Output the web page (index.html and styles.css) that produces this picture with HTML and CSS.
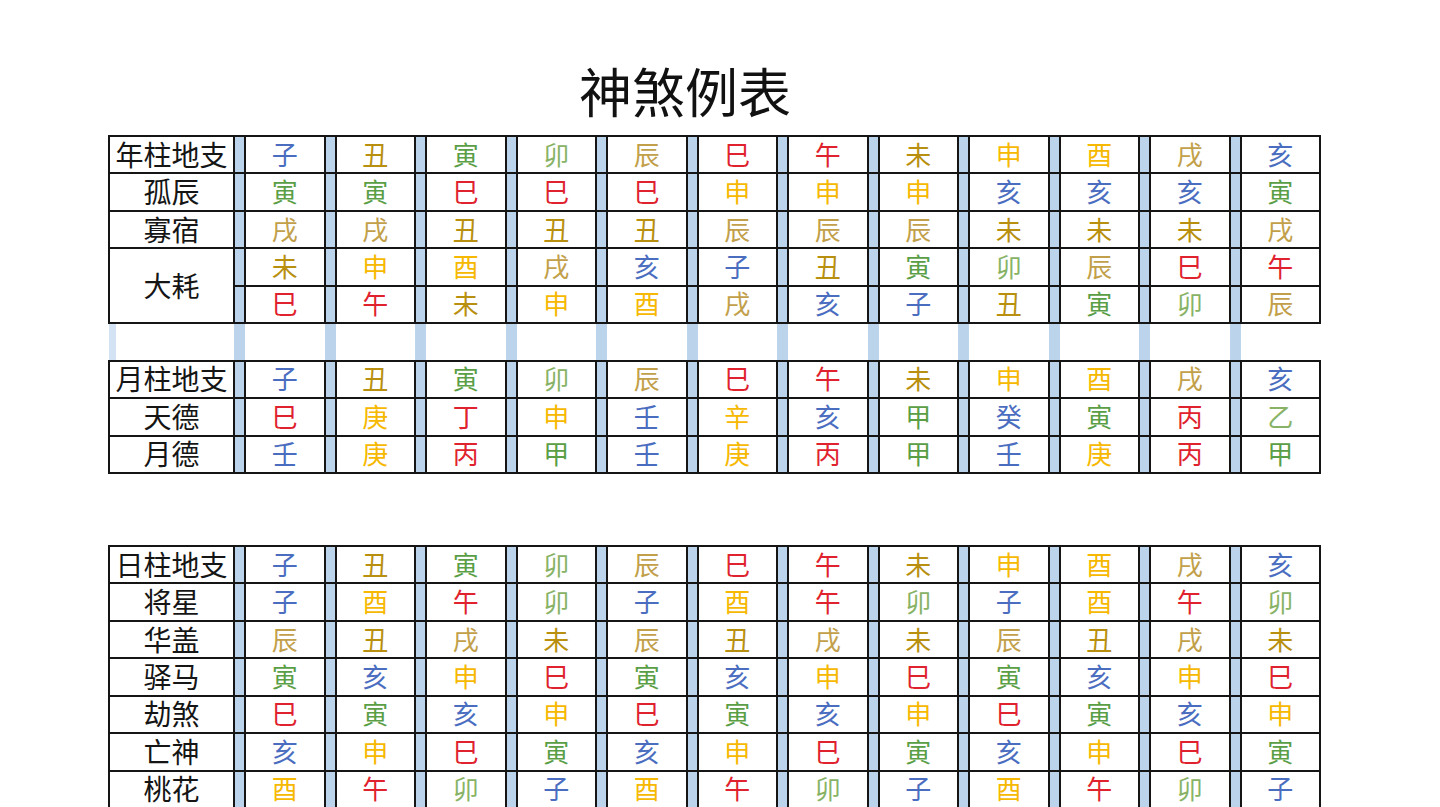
FILE: index.html
```html
<!DOCTYPE html>
<html lang="zh-CN">
<head>
<meta charset="utf-8">
<title>神煞例表</title>
<link rel="stylesheet" href="styles.css">
</head>
<body>
<main class="page">
<h1 class="title">神煞例表</h1>

<table class="grid grid-top">
<colgroup>
<col class="c-label">
<col class="c-sep"><col class="c-data"><col class="c-sep"><col class="c-data"><col class="c-sep"><col class="c-data"><col class="c-sep"><col class="c-data">
<col class="c-sep"><col class="c-data"><col class="c-sep"><col class="c-data"><col class="c-sep"><col class="c-data"><col class="c-sep"><col class="c-data">
<col class="c-sep"><col class="c-data"><col class="c-sep"><col class="c-data"><col class="c-sep"><col class="c-data"><col class="c-sep"><col class="c-data">
</colgroup>
<tbody>
<tr><th>年柱地支</th><td class="s"></td><td class="w">子</td><td class="s"></td><td class="e">丑</td><td class="s"></td><td class="g">寅</td><td class="s"></td><td class="gl">卯</td><td class="s"></td><td class="el">辰</td><td class="s"></td><td class="r">巳</td><td class="s"></td><td class="r">午</td><td class="s"></td><td class="e">未</td><td class="s"></td><td class="y">申</td><td class="s"></td><td class="y">酉</td><td class="s"></td><td class="el">戌</td><td class="s"></td><td class="w">亥</td></tr>
<tr><th>孤辰</th><td class="s"></td><td class="g">寅</td><td class="s"></td><td class="g">寅</td><td class="s"></td><td class="r">巳</td><td class="s"></td><td class="r">巳</td><td class="s"></td><td class="r">巳</td><td class="s"></td><td class="y">申</td><td class="s"></td><td class="y">申</td><td class="s"></td><td class="y">申</td><td class="s"></td><td class="w">亥</td><td class="s"></td><td class="w">亥</td><td class="s"></td><td class="w">亥</td><td class="s"></td><td class="g">寅</td></tr>
<tr><th>寡宿</th><td class="s"></td><td class="el">戌</td><td class="s"></td><td class="el">戌</td><td class="s"></td><td class="e">丑</td><td class="s"></td><td class="e">丑</td><td class="s"></td><td class="e">丑</td><td class="s"></td><td class="el">辰</td><td class="s"></td><td class="el">辰</td><td class="s"></td><td class="el">辰</td><td class="s"></td><td class="e">未</td><td class="s"></td><td class="e">未</td><td class="s"></td><td class="e">未</td><td class="s"></td><td class="el">戌</td></tr>
<tr><th rowspan="2">大耗</th><td class="s"></td><td class="e">未</td><td class="s"></td><td class="y">申</td><td class="s"></td><td class="y">酉</td><td class="s"></td><td class="el">戌</td><td class="s"></td><td class="w">亥</td><td class="s"></td><td class="w">子</td><td class="s"></td><td class="e">丑</td><td class="s"></td><td class="g">寅</td><td class="s"></td><td class="gl">卯</td><td class="s"></td><td class="el">辰</td><td class="s"></td><td class="r">巳</td><td class="s"></td><td class="r">午</td></tr>
<tr><td class="s"></td><td class="r">巳</td><td class="s"></td><td class="r">午</td><td class="s"></td><td class="e">未</td><td class="s"></td><td class="y">申</td><td class="s"></td><td class="y">酉</td><td class="s"></td><td class="el">戌</td><td class="s"></td><td class="w">亥</td><td class="s"></td><td class="w">子</td><td class="s"></td><td class="e">丑</td><td class="s"></td><td class="g">寅</td><td class="s"></td><td class="gl">卯</td><td class="s"></td><td class="el">辰</td></tr>
<tr class="spacer"><th></th><td class="s"></td><td></td><td class="s"></td><td></td><td class="s"></td><td></td><td class="s"></td><td></td><td class="s"></td><td></td><td class="s"></td><td></td><td class="s"></td><td></td><td class="s"></td><td></td><td class="s"></td><td></td><td class="s"></td><td></td><td class="s"></td><td></td><td class="s"></td><td></td></tr>
<tr><th>月柱地支</th><td class="s"></td><td class="w">子</td><td class="s"></td><td class="e">丑</td><td class="s"></td><td class="g">寅</td><td class="s"></td><td class="gl">卯</td><td class="s"></td><td class="el">辰</td><td class="s"></td><td class="r">巳</td><td class="s"></td><td class="r">午</td><td class="s"></td><td class="e">未</td><td class="s"></td><td class="y">申</td><td class="s"></td><td class="y">酉</td><td class="s"></td><td class="el">戌</td><td class="s"></td><td class="w">亥</td></tr>
<tr><th>天德</th><td class="s"></td><td class="r">巳</td><td class="s"></td><td class="y">庚</td><td class="s"></td><td class="r">丁</td><td class="s"></td><td class="y">申</td><td class="s"></td><td class="w">壬</td><td class="s"></td><td class="y">辛</td><td class="s"></td><td class="w">亥</td><td class="s"></td><td class="g">甲</td><td class="s"></td><td class="w">癸</td><td class="s"></td><td class="g">寅</td><td class="s"></td><td class="r">丙</td><td class="s"></td><td class="gl">乙</td></tr>
<tr><th>月德</th><td class="s"></td><td class="w">壬</td><td class="s"></td><td class="y">庚</td><td class="s"></td><td class="r">丙</td><td class="s"></td><td class="g">甲</td><td class="s"></td><td class="w">壬</td><td class="s"></td><td class="y">庚</td><td class="s"></td><td class="r">丙</td><td class="s"></td><td class="g">甲</td><td class="s"></td><td class="w">壬</td><td class="s"></td><td class="y">庚</td><td class="s"></td><td class="r">丙</td><td class="s"></td><td class="g">甲</td></tr>
</tbody>
</table>

<table class="grid grid-bottom">
<colgroup>
<col class="c-label">
<col class="c-sep"><col class="c-data"><col class="c-sep"><col class="c-data"><col class="c-sep"><col class="c-data"><col class="c-sep"><col class="c-data">
<col class="c-sep"><col class="c-data"><col class="c-sep"><col class="c-data"><col class="c-sep"><col class="c-data"><col class="c-sep"><col class="c-data">
<col class="c-sep"><col class="c-data"><col class="c-sep"><col class="c-data"><col class="c-sep"><col class="c-data"><col class="c-sep"><col class="c-data">
</colgroup>
<tbody>
<tr><th>日柱地支</th><td class="s"></td><td class="w">子</td><td class="s"></td><td class="e">丑</td><td class="s"></td><td class="g">寅</td><td class="s"></td><td class="gl">卯</td><td class="s"></td><td class="el">辰</td><td class="s"></td><td class="r">巳</td><td class="s"></td><td class="r">午</td><td class="s"></td><td class="e">未</td><td class="s"></td><td class="y">申</td><td class="s"></td><td class="y">酉</td><td class="s"></td><td class="el">戌</td><td class="s"></td><td class="w">亥</td></tr>
<tr><th>将星</th><td class="s"></td><td class="w">子</td><td class="s"></td><td class="y">酉</td><td class="s"></td><td class="r">午</td><td class="s"></td><td class="gl">卯</td><td class="s"></td><td class="w">子</td><td class="s"></td><td class="y">酉</td><td class="s"></td><td class="r">午</td><td class="s"></td><td class="gl">卯</td><td class="s"></td><td class="w">子</td><td class="s"></td><td class="y">酉</td><td class="s"></td><td class="r">午</td><td class="s"></td><td class="gl">卯</td></tr>
<tr><th>华盖</th><td class="s"></td><td class="el">辰</td><td class="s"></td><td class="e">丑</td><td class="s"></td><td class="el">戌</td><td class="s"></td><td class="e">未</td><td class="s"></td><td class="el">辰</td><td class="s"></td><td class="e">丑</td><td class="s"></td><td class="el">戌</td><td class="s"></td><td class="e">未</td><td class="s"></td><td class="el">辰</td><td class="s"></td><td class="e">丑</td><td class="s"></td><td class="el">戌</td><td class="s"></td><td class="e">未</td></tr>
<tr><th>驿马</th><td class="s"></td><td class="g">寅</td><td class="s"></td><td class="w">亥</td><td class="s"></td><td class="y">申</td><td class="s"></td><td class="r">巳</td><td class="s"></td><td class="g">寅</td><td class="s"></td><td class="w">亥</td><td class="s"></td><td class="y">申</td><td class="s"></td><td class="r">巳</td><td class="s"></td><td class="g">寅</td><td class="s"></td><td class="w">亥</td><td class="s"></td><td class="y">申</td><td class="s"></td><td class="r">巳</td></tr>
<tr><th>劫煞</th><td class="s"></td><td class="r">巳</td><td class="s"></td><td class="g">寅</td><td class="s"></td><td class="w">亥</td><td class="s"></td><td class="y">申</td><td class="s"></td><td class="r">巳</td><td class="s"></td><td class="g">寅</td><td class="s"></td><td class="w">亥</td><td class="s"></td><td class="y">申</td><td class="s"></td><td class="r">巳</td><td class="s"></td><td class="g">寅</td><td class="s"></td><td class="w">亥</td><td class="s"></td><td class="y">申</td></tr>
<tr><th>亡神</th><td class="s"></td><td class="w">亥</td><td class="s"></td><td class="y">申</td><td class="s"></td><td class="r">巳</td><td class="s"></td><td class="g">寅</td><td class="s"></td><td class="w">亥</td><td class="s"></td><td class="y">申</td><td class="s"></td><td class="r">巳</td><td class="s"></td><td class="g">寅</td><td class="s"></td><td class="w">亥</td><td class="s"></td><td class="y">申</td><td class="s"></td><td class="r">巳</td><td class="s"></td><td class="g">寅</td></tr>
<tr><th>桃花</th><td class="s"></td><td class="y">酉</td><td class="s"></td><td class="r">午</td><td class="s"></td><td class="gl">卯</td><td class="s"></td><td class="w">子</td><td class="s"></td><td class="y">酉</td><td class="s"></td><td class="r">午</td><td class="s"></td><td class="gl">卯</td><td class="s"></td><td class="w">子</td><td class="s"></td><td class="y">酉</td><td class="s"></td><td class="r">午</td><td class="s"></td><td class="gl">卯</td><td class="s"></td><td class="w">子</td></tr>
</tbody>
</table>
</main>
</body>
</html>
```

FILE: styles.css
```css
html, body {
  margin: 0;
  padding: 0;
  background: #ffffff;
}

body {
  font-family: "Noto Sans CJK SC", "Noto Sans", sans-serif;
  color: #111111;
  overflow: hidden;
}

.page {
  width: 1440px;
  height: 807px;
  overflow: hidden;
}

.title {
  margin: 0;
  padding: 64px 70px 0 0;
  height: 71px;
  font-size: 53px;
  line-height: 53px;
  font-weight: 400;
  text-align: center;
  color: #111111;
}

.grid {
  border-collapse: collapse;
  table-layout: fixed;
  width: 1213px;
  margin-left: 108px;
}

.grid-bottom {
  margin-top: 71px;
}

.c-label { width: 125px; }
.c-sep { width: 11px; background: #bcd3ec; }
.c-data { width: 79.5px; }

.grid tr {
  height: 37.45px;
}

.grid th,
.grid td {
  border: 2px solid #151515;
  padding: 0 0 2px 0;
  text-align: center;
  vertical-align: middle;
  line-height: 1;
  white-space: nowrap;
}

.grid th {
  font-size: 28px;
  font-weight: 400;
  color: #151515;
  background: #ffffff;
}

.grid td {
  font-size: 26px;
  font-weight: 400;
  background: #ffffff;
}

.grid td.s {
  background: transparent;
}

.grid .spacer th,
.grid .spacer td {
  border-left: none;
  border-right: none;
}

.grid .spacer th {
  background: linear-gradient(to right, #d3e3f4 0, #d3e3f4 7px, #ffffff 7px);
}

/* five-element colours */
.w  { color: #4a6dc0; }
.g  { color: #5a9e46; }
.gl { color: #88b366; }
.r  { color: #e0222e; }
.y  { color: #f6b800; }
.e  { color: #b88f0e; }
.el { color: #c2a04a; }
```
